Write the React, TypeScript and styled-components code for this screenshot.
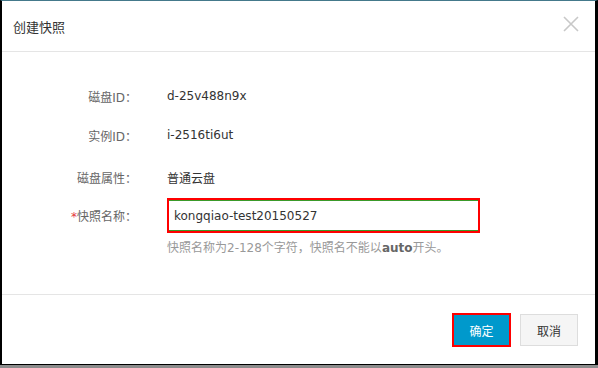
import React from "react";
import styled, { createGlobalStyle } from "styled-components";

const FONT = `"DejaVu Sans", "Noto Sans CJK SC", sans-serif`;

const Global = createGlobalStyle`
  html, body { margin: 0; padding: 0; }
  body {
    width: 598px;
    height: 368px;
    overflow: hidden;
    background: #8c8c8c;
    font-family: ${FONT};
  }
`;

const Dialog = styled.div`
  box-sizing: border-box;
  width: 598px;
  height: 365px;
  background: #fff;
  border-top: 1px solid #44798b;
  border-left: 2px solid #000;
  border-right: 3px solid #000;
  border-bottom: 1px solid #000;
  display: flex;
  flex-direction: column;
`;

const Header = styled.div`
  box-sizing: border-box;
  height: 51px;
  flex: none;
  border-bottom: 1px solid #e5e5e5;
  display: flex;
  align-items: center;
  justify-content: space-between;
  padding: 0 16px 0 11px;
`;

const Title = styled.h1`
  margin: 0;
  margin-top: 1px;
  font-size: 13px;
  font-weight: normal;
  color: #333;
  font-family: ${FONT};
`;

const Close = styled.button`
  width: 16px;
  height: 16px;
  padding: 0;
  margin-bottom: 5px;
  border: 0;
  background: none;
  display: flex;
  cursor: pointer;
`;

const Body = styled.div`
  box-sizing: border-box;
  height: 242px;
  flex: none;
  padding-top: 34px;
`;

const Row = styled.div<{ $mt?: number }>`
  display: grid;
  grid-template-columns: 135px 1fr;
  column-gap: 30px;
  align-items: center;
  min-height: 20px;
  margin-top: ${(p) => p.$mt ?? 0}px;
`;

const Label = styled.div`
  text-align: right;
  font-size: 12px;
  color: #666;
  white-space: nowrap;
`;

const Star = styled.span`
  color: #e4393c;
`;

const Value = styled.div`
  font-size: 12px;
  color: #333;
`;

const InputFrame = styled.div`
  box-sizing: border-box;
  width: 313px;
  height: 35px;
  border: 2px solid #f00;
  display: flex;
`;

const Input = styled.input`
  box-sizing: border-box;
  flex: 1;
  min-width: 0;
  height: 100%;
  margin: 0;
  border: 0;
  border-top: 1px solid #3a9a2a;
  border-bottom: 1px solid #3a9a2a;
  padding: 0 5px;
  font-family: ${FONT};
  font-size: 12px;
  color: #333;
  outline: none;
  background: #fff;
`;

const Hint = styled.div`
  font-size: 12px;
  color: #999;
  b {
    color: #666;
    font-weight: bold;
  }
`;

const Footer = styled.div`
  box-sizing: border-box;
  flex: 1;
  border-top: 1px solid #e5e5e5;
  display: flex;
  justify-content: flex-end;
  align-items: flex-start;
  gap: 9px;
  padding: 18px 17px 0 0;
`;

const Button = styled.button<{ $primary?: boolean }>`
  box-sizing: border-box;
  margin: 0;
  padding: 0;
  font-family: ${FONT};
  font-size: 12px;
  cursor: pointer;
  width: ${(p) => (p.$primary ? 59 : 58)}px;
  height: ${(p) => (p.$primary ? 34 : 32)}px;
  margin-top: ${(p) => (p.$primary ? 0 : 1)}px;
  background: ${(p) => (p.$primary ? "#0099cc" : "#f5f5f5")};
  color: ${(p) => (p.$primary ? "#fff" : "#333")};
  border: ${(p) => (p.$primary ? "2px solid #f00" : "1px solid #ddd")};
`;

export default function App() {
  return (
    <>
      <Global />
      <Dialog>
        <Header>
          <Title>创建快照</Title>
          <Close aria-label="关闭">
            <svg width="16" height="16" viewBox="0 0 16 16">
              <path d="M1 1 L15 15 M15 1 L1 15" stroke="#c8c8c8" strokeWidth="1.6" fill="none" />
            </svg>
          </Close>
        </Header>
        <Body>
          <Row>
            <Label>磁盘ID：</Label>
            <Value>d-25v488n9x</Value>
          </Row>
          <Row $mt={19}>
            <Label>实例ID：</Label>
            <Value>i-2516ti6ut</Value>
          </Row>
          <Row $mt={22}>
            <Label>磁盘属性：</Label>
            <Value>普通云盘</Value>
          </Row>
          <Row $mt={11}>
            <Label>
              <Star>*</Star>快照名称：
            </Label>
            <InputFrame>
              <Input defaultValue="kongqiao-test20150527" />
            </InputFrame>
          </Row>
          <Row $mt={3}>
            <div />
            <Hint>
              快照名称为2-128个字符，快照名不能以<b>auto</b>开头。
            </Hint>
          </Row>
        </Body>
        <Footer>
          <Button $primary>确定</Button>
          <Button>取消</Button>
        </Footer>
      </Dialog>
    </>
  );
}
